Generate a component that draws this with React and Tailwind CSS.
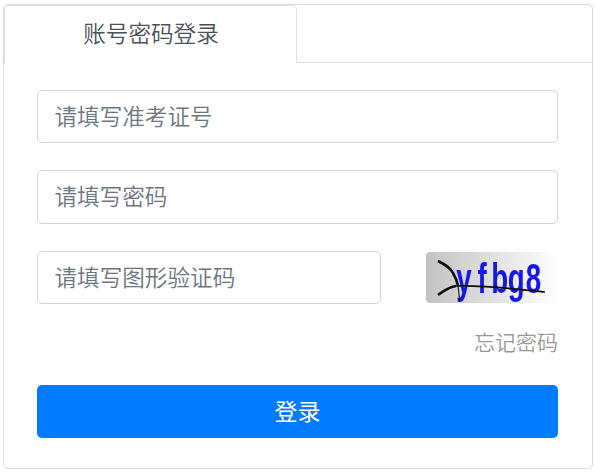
const cjk = "font-['Liberation_Sans','Noto_Sans_CJK_SC',sans-serif]";

function Field({ placeholder, className = "" }) {
  return (
    <input
      type="text"
      placeholder={placeholder}
      className={`block rounded-[5px] border border-[#ced4da] bg-white pt-[2px] pl-[16.5px] pr-[17px] text-[22.6px] font-[350] text-[#495057] placeholder:text-[#6c757d] placeholder:opacity-100 outline-none ${className}`}
    />
  );
}

function Captcha() {
  return (
    <svg width="132" height="51" viewBox="0 0 132 51" className="rounded-[4px] shrink-0">
      <defs>
        <linearGradient id="captchaBg" x1="0" x2="1" y1="0" y2="0">
          <stop offset="0" stopColor="#c2c2c2" />
          <stop offset="1" stopColor="#ffffff" />
        </linearGradient>
        <filter id="captchaBlur">
          <feGaussianBlur stdDeviation="0.5" />
        </filter>
      </defs>
      <rect width="132" height="51" fill="url(#captchaBg)" />
      <g filter="url(#captchaBlur)">
        <text
          transform="scale(0.66 1)"
          x="46 78 99 124 151"
          y="41"
          fontFamily="'Liberation Sans', sans-serif"
          fontWeight="700"
          fontSize="42"
          fill="#1616e6"
        >
          yfbg8
        </text>
        <path d="M12 9 C18 12 24 15 27 21 C30 26 31 29 32 34" fill="none" stroke="#111" strokeWidth="2.6" />
        <path d="M32 34 C33 40 33 45 34 50" fill="none" stroke="#222" strokeWidth="1.2" />
        <path d="M12 43 C18 39 22 35 30 34" fill="none" stroke="#111" strokeWidth="2.6" />
        <path d="M30 34 C60 33 90 37 119 40" fill="none" stroke="#111" strokeWidth="1.6" />
      </g>
    </svg>
  );
}

export default function App() {
  return (
    <div className={`h-[472px] w-[595px] bg-white pt-[4px] pl-[3px] ${cjk}`}>
      <div className="h-[465px] w-[590px] rounded-[5px] border border-[#dcdcdc]">
        <div className="flex h-[58px] border-b border-[#dee2e6]">
          <div className="flex h-[58px] w-[293px] items-center justify-center rounded-t-[5px] border border-b-0 border-[#dee2e6] bg-white pl-[1px] pt-[1px] text-[22.6px] font-[350] text-[#495057]">
            账号密码登录
          </div>
        </div>
        <form className="flex flex-col pt-[27px] pl-[33px] pr-[34px]">
          <Field placeholder="请填写准考证号" className="h-[53px] w-[521px]" />
          <Field placeholder="请填写密码" className="mt-[27px] h-[54px] w-[521px]" />
          <div className="mt-[27px] flex items-center justify-between">
            <Field placeholder="请填写图形验证码" className="h-[53px] w-[344px]" />
            <Captcha />
          </div>
          <div className="mt-[24px] text-right text-[21px] font-[350] leading-[30px] text-[#999999]">忘记密码</div>
          <button
            type="button"
            className="mt-[27px] h-[53px] w-[521px] rounded-[5px] bg-[#007bff] pt-[1px] text-[23px] text-white"
          >
            登录
          </button>
        </form>
      </div>
    </div>
  );
}
